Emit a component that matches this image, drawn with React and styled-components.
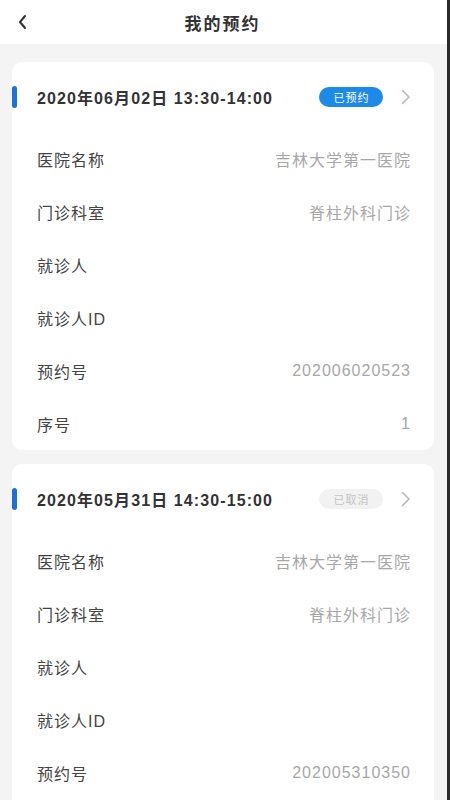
import styled, { createGlobalStyle } from "styled-components";

const GlobalStyle = createGlobalStyle`
  html, body {
    margin: 0;
    padding: 0;
    background: #f4f4f4;
    font-family: "Liberation Sans", "Noto Sans CJK SC", sans-serif;
  }
`;

const Page = styled.div`
  width: 450px;
  height: 800px;
  overflow: hidden;
  background: #f4f4f4;
  box-sizing: border-box;
  border-right: 3px solid #2a2a2a;
`;

const NavBar = styled.div`
  height: 44px;
  background: #fff;
  display: flex;
  align-items: center;
  justify-content: center;
  position: relative;

  & > .back {
    position: absolute;
    left: 17px;
    top: 14px;
  }

  & > h1 {
    margin: 0;
    font-size: 17px;
    font-weight: 700;
    letter-spacing: 2px;
    color: #333;
    margin-right: 2px;
  }
`;

const List = styled.div`
  display: flex;
  flex-direction: column;
  gap: 14px;
  padding: 18px 13px 0 12px;
`;

const Card = styled.div`
  background: #fff;
  border-radius: 10px;
`;

const CardHead = styled.div`
  height: 70px;
  display: flex;
  align-items: center;
  padding-right: 23px;

  & > .bar {
    width: 5px;
    height: 22px;
    border-radius: 3px;
    background: #1d6fe0;
    margin-right: 20px;
  }

  & > .date {
    flex: 1;
    font-size: 16px;
    font-weight: 700;
    color: #333;
    letter-spacing: 1.1px;
  }
`;

const Badge = styled.span`
  width: 64px;
  height: 20px;
  border-radius: 10px;
  font-size: 11px;
  letter-spacing: 1px;
  display: flex;
  align-items: center;
  justify-content: center;
  margin-right: 18px;
  background: ${(p) => (p.$done ? "#f2f2f2" : "#1e8ae8")};
  color: ${(p) => (p.$done ? "#c4c4c4" : "#fff")};
`;

const Row = styled.div`
  height: 53px;
  display: flex;
  align-items: center;
  justify-content: space-between;
  padding: 0 23px 0 25px;

  & > .label {
    font-size: 16px;
    letter-spacing: 1px;
    color: #444;
  }

  & > .value {
    font-size: 16px;
    letter-spacing: 1px;
    color: #a8a8a8;
  }
`;

const Chevron = ({ color = "#bbb", size = 14 }) => (
  <svg width={size * 0.6} height={size} viewBox="0 0 9 15" fill="none">
    <path d="M1.5 1.5l6 6-6 6" stroke={color} strokeWidth="1.6" strokeLinecap="round" strokeLinejoin="round" />
  </svg>
);

const BackIcon = () => (
  <svg width="11" height="16" viewBox="0 0 11 16" fill="none">
    <path d="M8 2L3 8l5 6" stroke="#333" strokeWidth="2" strokeLinecap="round" strokeLinejoin="round" />
  </svg>
);

const orders = [
  {
    date: "2020年06月02日 13:30-14:00",
    status: "已预约",
    done: false,
    rows: [
      ["医院名称", "吉林大学第一医院"],
      ["门诊科室", "脊柱外科门诊"],
      ["就诊人", ""],
      ["就诊人ID", ""],
      ["预约号", "202006020523"],
      ["序号", "1"],
    ],
  },
  {
    date: "2020年05月31日 14:30-15:00",
    status: "已取消",
    done: true,
    rows: [
      ["医院名称", "吉林大学第一医院"],
      ["门诊科室", "脊柱外科门诊"],
      ["就诊人", ""],
      ["就诊人ID", ""],
      ["预约号", "202005310350"],
      ["序号", "1"],
    ],
  },
];

export default function App() {
  return (
    <Page>
      <GlobalStyle />
      <NavBar>
        <span className="back">
          <BackIcon />
        </span>
        <h1>我的预约</h1>
      </NavBar>
      <List>
        {orders.map((o) => (
          <Card key={o.date}>
            <CardHead>
              <span className="bar" />
              <span className="date">{o.date}</span>
              <Badge $done={o.done}>{o.status}</Badge>
              <Chevron color="#bdbdbd" size={16} />
            </CardHead>
            {o.rows.map(([label, value]) => (
              <Row key={label}>
                <span className="label">{label}</span>
                <span className="value">{value}</span>
              </Row>
            ))}
          </Card>
        ))}
      </List>
    </Page>
  );
}
